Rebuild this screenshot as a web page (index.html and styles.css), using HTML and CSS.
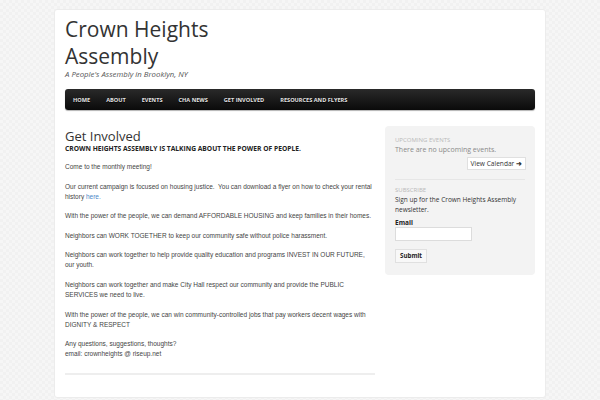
FILE: index.html
```html
<!DOCTYPE html>
<html>
<head>
<meta charset="utf-8">
<link rel="stylesheet" href="styles.css">
</head>
<body>
<div class="page">
  <header class="header">
    <h1 class="site-title">Crown Heights Assembly</h1>
    <p class="tagline">A People's Assembly in Brooklyn, NY</p>
  </header>
  <nav class="nav">
    <a>Home</a><a>About</a><a>Events</a><a>CHA News</a><a>Get Involved</a><a>Resources and Flyers</a>
  </nav>
  <div class="main">
    <article class="content">
      <h2 class="page-title">Get Involved</h2>
      <h3 class="lead">CROWN HEIGHTS ASSEMBLY IS TALKING ABOUT THE POWER OF PEOPLE.</h3>
      <p>Come to the monthly meeting!</p>
      <p>Our current campaign is focused on housing justice.&nbsp; You can download a flyer on how to check your rental history <a class="link">here.</a></p>
      <p>With the power of the people, we can demand AFFORDABLE HOUSING and keep families in their homes.</p>
      <p>Neighbors can WORK TOGETHER to keep our community safe without police harassment.</p>
      <p>Neighbors can work together to help provide quality education and programs INVEST IN OUR FUTURE, our youth.</p>
      <p>Neighbors can work together and make City Hall respect our community and provide the PUBLIC SERVICES we need to live.</p>
      <p>With the power of the people, we can win community-controlled jobs that pay workers decent wages with DIGNITY &amp; RESPECT</p>
      <p>Any questions, suggestions, thoughts?<br>email: crownheights @ riseup.net</p>
      <div class="rule"></div>
    </article>
    <aside class="sidebar">
      <section class="widget">
        <h4 class="widget-title">Upcoming Events</h4>
        <p class="widget-text">There are no upcoming events.</p>
        <div class="cal-row"><span class="btn-cal">View Calendar <span class="arrow">&#10140;</span></span></div>
      </section>
      <section class="widget widget-sub">
        <h4 class="widget-title">Subscribe</h4>
        <p class="widget-text dark">Sign up for the Crown Heights Assembly newsletter.</p>
        <label class="label">Email</label>
        <div class="input"></div>
        <span class="btn-submit">Submit</span>
      </section>
    </aside>
  </div>
</div>
</body>
</html>
```
FILE: styles.css
```css
html, body { margin: 0; padding: 0; }
body {
  background-color: #f6f6f6;
  background-image: linear-gradient(45deg, #f1f1f1 25%, transparent 25%, transparent 75%, #f1f1f1 75%), linear-gradient(45deg, #f1f1f1 25%, transparent 25%, transparent 75%, #f1f1f1 75%);
  background-size: 6px 6px;
  background-position: 0 0, 3px 3px;
  font-family: "Liberation Sans", Arial, sans-serif;
  width: 600px;
  height: 400px;
  overflow: hidden;
}
.page {
  margin: 9px 0 0 54px;
  width: 470px;
  height: 387px;
  padding: 0 10px 0 10px;
  background: #fff;
  border: 1px solid #ececec;
  border-radius: 3px;
}
.header { padding-top: 6px; height: 73px; }
.site-title {
  margin: 0;
  width: 200px;
  font-family: "Open Sans", sans-serif;
  font-weight: normal;
  font-size: 21px;
  line-height: 27px;
  color: #333;
}
.tagline {
  margin: -1px 0 0 0;
  font-family: "Open Sans", sans-serif;
  font-style: italic;
  font-size: 7.8px;
  line-height: 10px;
  color: #555;
}
.nav {
  height: 21px;
  background: linear-gradient(#2a2a2a, #0a0a0a);
  border-radius: 3px;
  box-shadow: 0 1px 1px rgba(0,0,0,0.3);
  display: flex;
  align-items: center;
  padding-left: 8px;
}
.nav a {
  font-family: "Open Sans", sans-serif;
  font-size: 5.6px;
  font-weight: bold;
  text-transform: uppercase;
  color: #e4e4e4;
  text-shadow: 0 1px 0 #000;
  margin-right: 16px;
}
.main { display: flex; margin-top: 17px; gap: 10px; }
.content { width: 310px; }
.page-title {
  margin: 1px 0 0 0;
  font-family: "Open Sans", sans-serif;
  font-weight: normal;
  font-size: 13px;
  line-height: 16px;
  color: #333;
}
.lead {
  margin: 0 0 8px 0;
  font-family: "Open Sans", sans-serif;
  font-size: 6.7px;
  font-weight: bold;
  color: #222;
  line-height: 10px;
}
.content p {
  margin: 0 0 9.6px 0;
  font-size: 6.5px;
  line-height: 10px;
  color: #444;
}
.link { color: #4a86c8; }
.rule {
  margin-top: 14px;
  height: 2px;
  background: #eeeeee;
}
.sidebar {
  width: 130px;
  margin-top: -1px;
  align-self: flex-start;
  background: #f3f3f3;
  border-radius: 4px;
  padding: 10px 10px 12px 10px;
  font-family: "Open Sans", sans-serif;
}
.widget { padding-bottom: 9px; border-bottom: 1px solid #e6e6e6; }
.widget-sub { border-bottom: none; padding-top: 6px; padding-bottom: 0; }
.widget-title {
  margin: 0;
  font-weight: normal;
  font-size: 6px;
  text-transform: uppercase;
  color: #b9b9b9;
  line-height: 9px;
}
.widget-text {
  margin: 0;
  font-size: 7px;
  line-height: 10px;
  color: #8a8a8a;
}
.widget-text.dark { color: #333; font-size: 6.5px; line-height: 10px; margin-top: 0; }
.cal-row { display: flex; justify-content: flex-end; margin-top: 2px; margin-right: -1px; }
.btn-cal {
  background: #fff;
  border: 1px solid #e0e0e0;
  font-size: 6.6px;
  color: #333;
  padding: 0 3px;
  line-height: 11px;
}
.arrow { font-size: 6.6px; font-weight: bold; }
.label {
  display: block;
  margin-top: 4px;
  font-size: 6.5px;
  font-weight: bold;
  color: #222;
  line-height: 8px;
}
.input {
  margin-top: 0;
  width: 75px;
  height: 12px;
  background: #fff;
  border: 1px solid #dcdcdc;
}
.btn-submit {
  display: inline-block;
  margin-top: 6px;
  background: #f8f8f8;
  border: 1px solid #e0e0e0;
  font-size: 6.2px;
  font-weight: bold;
  color: #222;
  padding: 0 4px;
  line-height: 12px;
}
```
